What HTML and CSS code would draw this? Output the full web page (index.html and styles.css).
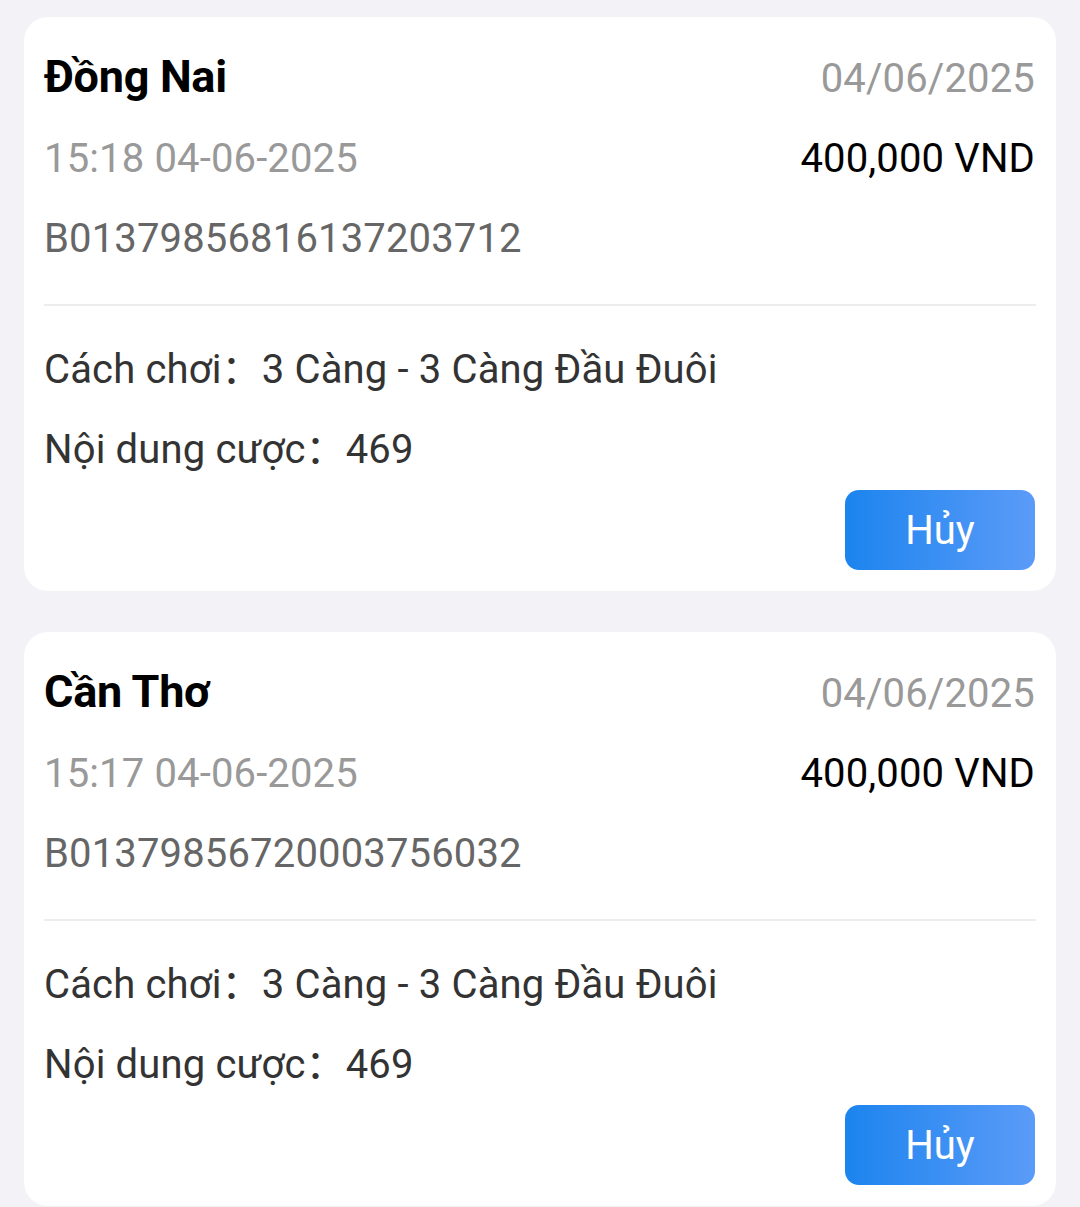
FILE: index.html
```html
<!DOCTYPE html>
<html lang="vi">
<head>
  <meta charset="UTF-8">
  <meta name="viewport" content="width=device-width, initial-scale=1.0">
  <title>Lịch sử cược</title>
  <link rel="stylesheet" href="styles.css">
</head>
<body>
  <div class="bet-list">
    <div class="bet-card">
      <div class="row row-head">
        <span class="title">Đồng Nai</span>
        <span class="date">04/06/2025</span>
      </div>
      <div class="row">
        <span class="time">15:18 04-06-2025</span>
        <span class="amount">400,000 VND</span>
      </div>
      <div class="row">
        <span class="code">B01379856816137203712</span>
      </div>
      <div class="divider"></div>
      <div class="detail">Cách chơi：3 Càng - 3 Càng Đầu Đuôi</div>
      <div class="detail">Nội dung cược：469</div>
      <div class="actions">
        <button class="cancel-btn">Hủy</button>
      </div>
    </div>

    <div class="bet-card">
      <div class="row row-head">
        <span class="title">Cần Thơ</span>
        <span class="date">04/06/2025</span>
      </div>
      <div class="row">
        <span class="time">15:17 04-06-2025</span>
        <span class="amount">400,000 VND</span>
      </div>
      <div class="row">
        <span class="code">B01379856720003756032</span>
      </div>
      <div class="divider"></div>
      <div class="detail">Cách chơi：3 Càng - 3 Càng Đầu Đuôi</div>
      <div class="detail">Nội dung cược：469</div>
      <div class="actions">
        <button class="cancel-btn">Hủy</button>
      </div>
    </div>
  </div>
</body>
</html>
```

FILE: styles.css
```css
body {
  margin: 0;
  background-color: #f2f2f7;
  font-family: Roboto, "Noto Sans CJK SC", sans-serif;
  font-size: 40px;
  letter-spacing: 0.15px;
  line-height: 80px;
  color: #000;
}

.bet-list {
  padding: 17px 24px;
}

.bet-card {
  background-color: #fff;
  border-radius: 24px;
  padding: 20px 21px 21px 20px;
  margin-bottom: 41px;
}

.row {
  display: flex;
  justify-content: space-between;
  align-items: baseline;
  height: 80px;
}

.row-head {
  height: 82px;
}

.title {
  font-size: 45px;
  font-weight: 700;
  letter-spacing: -0.3px;
  color: #000;
}

.date {
  color: #999;
}

.time {
  color: #999;
}

.amount {
  color: #000;
}

.code {
  color: #666;
}

.divider {
  height: 2px;
  background-color: #ededed;
  margin: 25px -1px 24px 0;
}

.detail {
  color: #333;
}

.actions {
  display: flex;
  justify-content: flex-end;
}

.cancel-btn {
  width: 190px;
  height: 80px;
  border: none;
  border-radius: 14px;
  background: linear-gradient(to right, #1c84ee, #5b9bf8);
  color: #fff;
  font-family: Roboto, sans-serif;
  font-size: 40px;
  padding: 0;
  cursor: pointer;
}
```
